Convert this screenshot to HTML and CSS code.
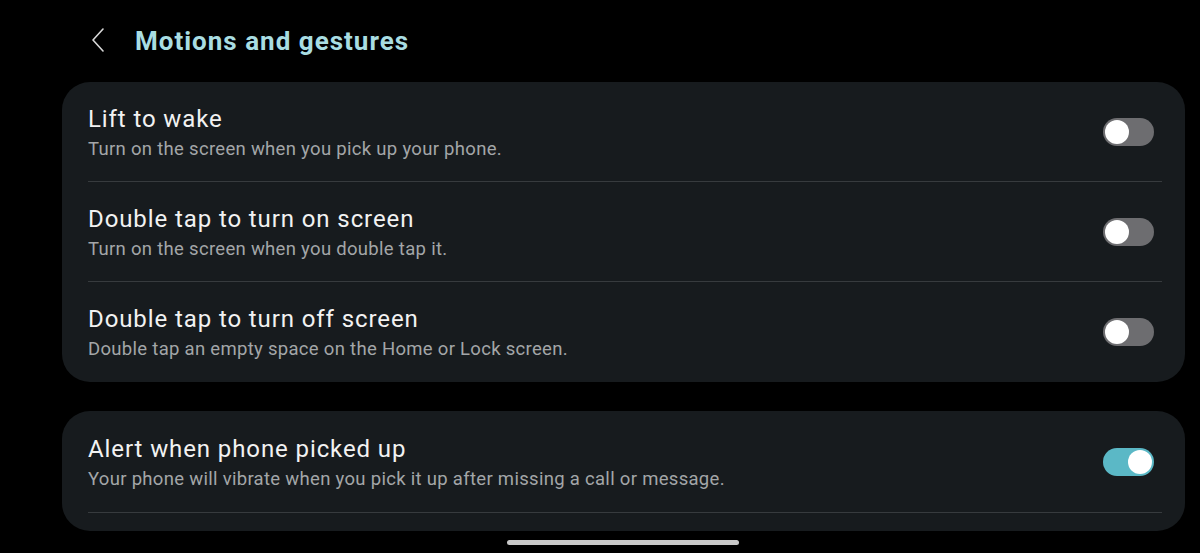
FILE: index.html
```html
<!DOCTYPE html>
<html lang="en">
<head>
    <meta charset="UTF-8">
    <meta name="viewport" content="width=device-width, initial-scale=1.0">
    <title>Motions and gestures</title>
    <link rel="stylesheet" href="styles.css">
</head>
<body>
    <header class="topbar">
        <svg class="back" width="14" height="24" viewBox="0 0 14 24">
            <path d="M12 1 L2 12 L12 23" fill="none" stroke="#d8d8d8" stroke-width="1.6" stroke-linecap="round" stroke-linejoin="round"/>
        </svg>
        <h1>Motions and gestures</h1>
    </header>

    <section class="card">
        <div class="row">
            <div class="text">
                <div class="title">Lift to wake</div>
                <div class="sub">Turn on the screen when you pick up your phone.</div>
            </div>
            <span class="switch"></span>
        </div>
        <div class="row">
            <div class="text">
                <div class="title">Double tap to turn on screen</div>
                <div class="sub">Turn on the screen when you double tap it.</div>
            </div>
            <span class="switch"></span>
        </div>
        <div class="row">
            <div class="text">
                <div class="title">Double tap to turn off screen</div>
                <div class="sub">Double tap an empty space on the Home or Lock screen.</div>
            </div>
            <span class="switch"></span>
        </div>
    </section>

    <section class="card card-open">
        <div class="row">
            <div class="text">
                <div class="title">Alert when phone picked up</div>
                <div class="sub">Your phone will vibrate when you pick it up after missing a call or message.</div>
            </div>
            <span class="switch on"></span>
        </div>
    </section>

    <div class="home-bar"></div>
</body>
</html>
```

FILE: styles.css
```css
body {
    font-family: Roboto, "Noto Sans", sans-serif;
    background-color: #000;
    margin: 0;
    padding: 0;
    width: 1200px;
    height: 553px;
    overflow: hidden;
}

.topbar {
    display: flex;
    align-items: center;
    height: 82px;
    padding-left: 91px;
    box-sizing: border-box;
}

.back {
    display: block;
    margin-top: -2px;
}

.topbar h1 {
    margin: 0 0 0 30px;
    font-size: 26px;
    line-height: 30px;
    font-weight: 700;
    color: #a9dde2;
    letter-spacing: 1px;
}

.card {
    margin: 0 15px 0 62px;
    background-color: #171b1e;
    border-radius: 28px;
    padding: 0 23px 0 26px;
}

.row {
    display: flex;
    align-items: center;
    justify-content: space-between;
    height: 100px;
    box-sizing: border-box;
    border-bottom: 1px solid #373b3e;
}

.card .row:last-child {
    border-bottom: none;
}

.card-open {
    margin-top: 29px;
    padding-bottom: 18px;
}

.card-open .row:last-child {
    height: 102px;
    border-bottom: 1px solid #373b3e;
}

.text {
    display: flex;
    flex-direction: column;
    padding-top: 2px;
}

.title {
    font-size: 24px;
    line-height: 28px;
    color: #f2f2f2;
    letter-spacing: 0.9px;
}

.sub {
    font-size: 18.5px;
    line-height: 24px;
    color: #a3a6a8;
    margin-top: 4px;
    letter-spacing: 0.3px;
}

.switch {
    position: relative;
    width: 51px;
    height: 28px;
    border-radius: 14px;
    background-color: #6d6d70;
    margin-right: 8px;
}

.switch::after {
    content: "";
    position: absolute;
    left: 2px;
    top: 2px;
    width: 24px;
    height: 24px;
    border-radius: 50%;
    background-color: #fff;
}

.switch.on {
    background-color: #5bb8c6;
}

.switch.on::after {
    left: auto;
    right: 2px;
}

.home-bar {
    width: 232px;
    height: 5px;
    border-radius: 3px;
    background-color: #c9c9c9;
    margin: 9px 0 0 507px;
}
```
